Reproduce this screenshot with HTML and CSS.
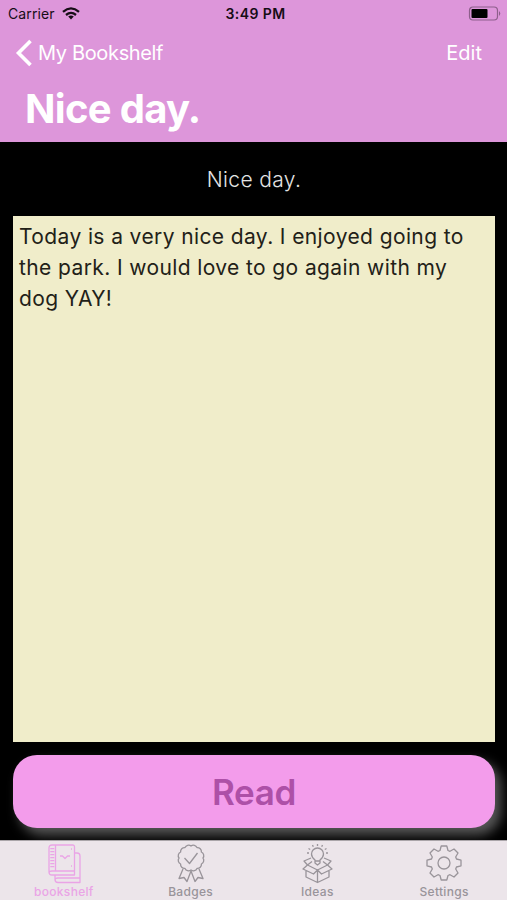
FILE: index.html
```html
<!DOCTYPE html>
<html lang="en">
  <head>
    <meta charset="UTF-8" />
    <meta name="viewport" content="width=device-width, initial-scale=1.0" />
    <title>My Bookshelf</title>
    <link rel="stylesheet" href="styles.css">
  </head>
  <body>
    <header>
      <div class="statusBar">
        <div class="carrier">
          <span>Carrier</span>
          <svg width="18" height="13" viewBox="0 0 18 13" fill="none" stroke="#160d16" stroke-width="2.3">
            <path d="M1 4.8Q9-2 17 4.8M4 8Q9 3.8 14 8" />
            <path d="M6.2 9.6Q9 7.5 11.8 9.6L9 12.5Z" fill="#160d16" stroke="none" />
          </svg>
        </div>
        <span class="time">3:49 PM</span>
        <svg class="battery" width="33" height="15" viewBox="0 0 33 15">
          <rect x="1.5" y="1" width="28" height="13" rx="3.5" fill="none" stroke="#8d5f8b" stroke-width="1.2" />
          <rect x="3.5" y="3" width="16" height="9" rx="1" fill="#000" />
          <path d="M31 5Q33.5 7.5 31 10Z" fill="#8d5f8b" />
        </svg>
      </div>
      <nav class="navBar">
        <a class="back">
          <svg width="17" height="28" viewBox="0 0 17 28" fill="none" stroke="#fff" stroke-width="3.6">
            <path d="M15.5 2L3.5 14L15.5 26" />
          </svg>
          <span>My Bookshelf</span>
        </a>
        <a class="edit">Edit</a>
      </nav>
      <h1>Nice day.</h1>
    </header>

    <main>
      <p class="storyTitle">Nice day.</p>
      <div class="story">
        Today is a very nice day. I enjoyed going to<br>
        the park. I would love to go again with my<br>
        dog YAY!
      </div>
      <button class="btn" type="button">Read</button>
    </main>

    <footer class="tabBar">
      <div class="tab active">
        <svg width="34" height="40" viewBox="0 0 34 40">
          <path d="M5 1H26Q27.5 1 27.5 3V31H5Q2 31 2 28V4Q2 1 5 1ZM8.5 1V27M2 29Q2 27 5 27H27.5M27.5 9H30Q33 9 33 12V38.5H11Q8 38.5 8 35.5V31M8 36Q8 34 11 34H33" />
          <path class="spine" d="M5.3 4V25" />
          <path d="M13 12H15.5L18 14.5L20.5 12H23M24 5H25M24 22H25" />
        </svg>
        <span>bookshelf</span>
      </div>
      <div class="tab">
        <svg width="34" height="40" viewBox="-17 -14 34 40">
          <path d="M0-12A4 4 0 0 1 6-10.4A4 4 0 0 1 10.4-6A4 4 0 0 1 12 0A4 4 0 0 1 10.4 6A4 4 0 0 1 6 10.4A4 4 0 0 1 0 12A4 4 0 0 1-6 10.4A4 4 0 0 1-10.4 6A4 4 0 0 1-12 0A4 4 0 0 1-10.4-6A4 4 0 0 1-6-10.4A4 4 0 0 1 0-12Z" />
          <path d="M-6.5 0L-1.5 5.5L6.5-5" />
          <path d="M-8 11L-12 20.5L-7 19.5L-4 23.5L0 13L4 23.5L7 19.5L12 20.5L8 11" />
        </svg>
        <span>Badges</span>
      </div>
      <div class="tab">
        <svg width="34" height="40" viewBox="0 0 34 40">
          <path d="M15 19V16Q11.5 13 11.5 10A6 6 0 0 1 23.5 10Q23.5 13 20 16V19L17.5 21ZM15 17H20" />
          <path d="M17.5 0V2M12.5 1L13.3 2.8M22.5 1L21.7 2.8M8.5 4.5L10.2 5.5M26.5 4.5L24.8 5.5M7 9H9M28 9H26" />
          <path d="M11 14L4 17L7.5 21L17.5 26L27.5 21L31 17L24 14M7.5 21L12 17.5M27.5 21L23 17.5M7.5 21L3 25L13.5 30L17.5 26L21.5 30L32 25L27.5 21M6 27V33L17.5 38.5L29 33V27M17.5 26V38.5" />
        </svg>
        <span>Ideas</span>
      </div>
      <div class="tab">
        <svg width="38" height="40" viewBox="-19 -19 38 40">
          <path d="M-4-12.5L-2.8-17H2.8L4-12.5L6-11.7L10-14L14-10L11.7-6L12.5-4L17-2.8V2.8L12.5 4L11.7 6L14 10L10 14L6 11.7L4 12.5L2.8 17H-2.8L-4 12.5L-6 11.7L-10 14L-14 10L-11.7 6L-12.5 4L-17 2.8V-2.8L-12.5-4L-11.7-6L-14-10L-10-14L-6-11.7Z" />
          <circle r="6" />
        </svg>
        <span>Settings</span>
      </div>
    </footer>
  </body>
</html>
```
FILE: styles.css
```css
* {
  box-sizing: border-box;
}
body {
  margin: 0;
  height: 900px;
  display: flex;
  flex-direction: column;
  background: #000;
  font-family: Inter, "Liberation Sans", sans-serif;
}
header {
  height: 142px;
  background: #dd96da;
  color: white;
}
.statusBar {
  height: 27px;
  padding: 0 6px 0 8px;
  display: grid;
  grid-template-columns: 1fr auto 1fr;
  align-items: center;
  color: #160d16;
  font-size: 14px;
}
.carrier {
  display: flex;
  align-items: center;
  gap: 7px;
  letter-spacing: 0.1px;
}
.time {
  padding-left: 2px;
  font-weight: 600;
  letter-spacing: 0.4px;
}
.battery {
  justify-self: end;
}
.navBar {
  height: 51px;
  padding: 0 25px 0 15px;
  display: flex;
  align-items: center;
  justify-content: space-between;
  font-size: 20px;
}
.back {
  display: flex;
  align-items: center;
  gap: 6px;
  letter-spacing: -0.35px;
}
h1 {
  margin: 0;
  padding-left: 25px;
  font-size: 40px;
  line-height: 62px;
  font-weight: 700;
  letter-spacing: -0.7px;
}
main {
  height: 698px;
  padding: 0 12px 0 13px;
  overflow: hidden;
  display: flex;
  flex-direction: column;
}
.storyTitle {
  margin: 0;
  height: 74px;
  line-height: 76px;
  text-align: center;
  color: #e4e4e4;
  font-size: 21px;
  font-weight: 300;
  letter-spacing: 0.35px;
}
.story {
  height: 526px;
  padding: 5px 6px;
  background: #f0edca;
  color: #222118;
  font-size: 21px;
  line-height: 31.2px;
  letter-spacing: 0.39px;
  white-space: nowrap;
}
.btn {
  flex-shrink: 0;
  height: 73px;
  margin-top: 13px;
  border: none;
  border-radius: 24px;
  background: #f39ceb;
  color: #ad50a7;
  font: 600 35px Inter, sans-serif;
  letter-spacing: -0.3px;
  box-shadow: 6px 7px 12px #585858;
}
.tabBar {
  height: 60px;
  padding-top: 3px;
  display: grid;
  grid-template-columns: repeat(4, 1fr);
  background: #ece5ea;
  border-top: 1px solid #aaa5a9;
}
.tab {
  padding-left: 1px;
  display: flex;
  flex-direction: column;
  align-items: center;
  color: #99949a;
  font-size: 12px;
  line-height: 16px;
  font-weight: 500;
  letter-spacing: 0.3px;
}
.tab svg {
  fill: none;
  stroke: currentColor;
  stroke-width: 1.3;
  stroke-linejoin: round;
}
.tab .spine {
  stroke-width: 4;
  stroke-dasharray: 1.3 1.7;
}
.active {
  color: #eaa4e6;
}
```
